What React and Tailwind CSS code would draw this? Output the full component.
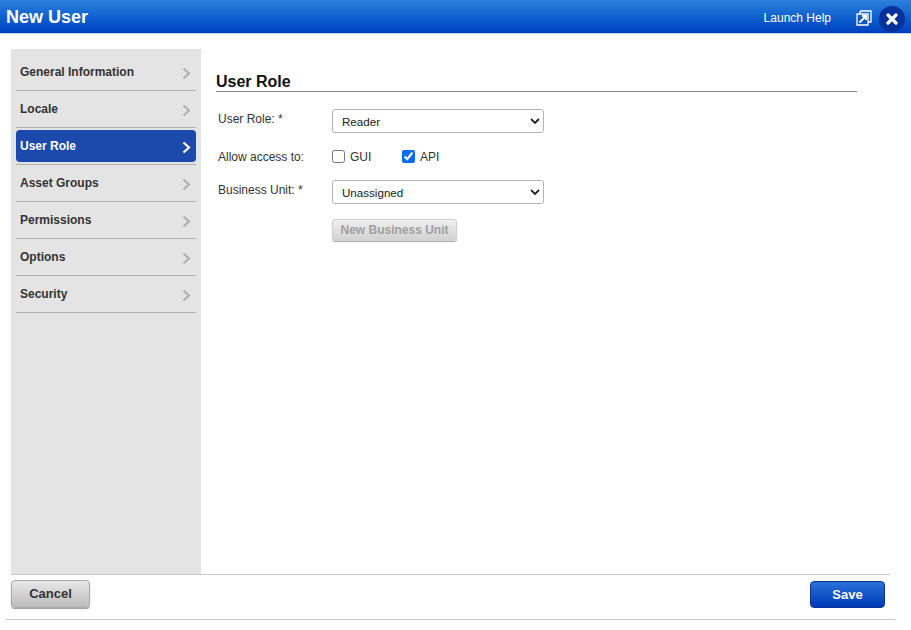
const arial = "font-['Liberation_Sans',Arial,sans-serif]";

const steps = ['General Information', 'Locale', 'User Role', 'Asset Groups', 'Permissions', 'Options', 'Security'];

function Chevron({ active }) {
  return (
    <svg width="9" height="13" viewBox="0 0 9 13" fill="none" className="mt-0.5">
      <path d="M1.5 1.5 L7 6.5 L1.5 11.5" stroke={active ? '#ffffff' : '#b0b0b0'} strokeWidth="2.2" />
    </svg>
  );
}

function SelectBox({ value, options }) {
  return (
    <div className="relative w-[212px] h-6">
      <select
        defaultValue={value}
        className="appearance-none w-full h-full bg-white border border-[#b5b5b5] rounded-[3px] pl-[9px] pt-[2px] text-[11.6px] text-[#222]"
      >
        {options.map(o => <option key={o}>{o}</option>)}
      </select>
      <svg width="10" height="7" viewBox="0 0 10 7" fill="none" className="absolute right-[4px] top-[9px] pointer-events-none">
        <path d="M1 1 L5 5 L9 1" stroke="#222" strokeWidth="1.8" />
      </svg>
    </div>
  );
}

export default function App() {
  return (
    <div className={`${arial} w-[911px] h-[630px] bg-white flex flex-col overflow-hidden`}>
      <header className="h-[34px] shrink-0 bg-gradient-to-b from-[#2a80dc] to-[#0040c0] border-b border-[#c5d3ea] flex items-center justify-between pl-[6px] pr-[6px]">
        <h1 className="text-lg font-bold text-white">New User</h1>
        <div className="flex items-center mt-[5px]">
          <span className="text-xs text-white mr-[25px] -mt-[3px]">Launch Help</span>
          <svg width="16" height="16" viewBox="0 0 16 16" fill="none" className="mr-[7px] -mt-[2px]">
            <path d="M4 1 H15 V12 H12 M4 1 V4 M1 4 H12 V15 H1 Z" stroke="#fff" strokeWidth="1.3" />
            <path d="M3.5 12.5 L9.5 6.5 M6 6 H10 V10" stroke="#fff" strokeWidth="2" />
          </svg>
          <button className="w-[26px] h-[26px] rounded-full bg-[#06309a] flex items-center justify-center">
            <svg width="12" height="12" viewBox="0 0 12 12" fill="none">
              <path d="M2 2 L10 10 M10 2 L2 10" stroke="#fff" strokeWidth="3.2" strokeLinecap="round" />
            </svg>
          </button>
        </div>
      </header>

      <div className="flex h-[526px] shrink-0 mt-[15px] ml-[11px] w-[879px] border-b border-[#c8c8c8]">
        <nav className="w-[190px] bg-[#e4e4e4] pt-[5px] px-[5px]">
          {steps.map(step => {
            const active = step === 'User Role';
            return (
              <div key={step} className={`h-[37px] border-b border-[#b0b0b0] ${active ? 'pt-[2px]' : ''}`}>
                <div className={`flex items-center justify-between pl-1 pr-[5px] text-xs font-bold ${active ? 'h-[32px] bg-[#1b4aac] rounded text-white' : 'h-[36px] text-[#333]'}`}>
                  <span>{step}</span>
                  <Chevron active={active} />
                </div>
              </div>
            );
          })}
        </nav>

        <main className="flex-1 pl-[15px] pt-[23px]">
          <h2 className="w-[641px] h-[20px] text-base leading-[19px] font-bold text-[#111] border-b border-[#8a8a8a]">User Role</h2>
          <div className="mt-[17px] text-xs text-[#333]">
            <div className="flex items-center h-6">
              <label className="w-[116px] pl-[2px] -mt-[4px]">User Role: *</label>
              <SelectBox value="Reader" options={['Reader']} />
            </div>
            <div className="flex items-center h-[14px] mt-[17px]">
              <label className="w-[116px] pl-[2px]">Allow access to:</label>
              <input type="checkbox" className="w-[13px] h-[13px] m-0 -mt-px" />
              <span className="ml-[5px] w-[52px]">GUI</span>
              <input type="checkbox" defaultChecked className="w-[13px] h-[13px] m-0 -mt-px accent-[#0a6cf5]" />
              <span className="ml-[5px]">API</span>
            </div>
            <div className="flex items-center h-6 mt-[16px]">
              <label className="w-[116px] pl-[2px] -mt-[4px]">Business Unit: *</label>
              <SelectBox value="Unassigned" options={['Unassigned']} />
            </div>
            <button disabled className="ml-[116px] mt-[15px] w-[125px] h-[22px] rounded-[3px] border border-[#d0d0d0] bg-gradient-to-b from-[#f0f0f0] to-[#d2d2d2] shadow-[0_1px_1px_#aaa] text-xs font-bold text-[#a0a0a0]">
              New Business Unit
            </button>
          </div>
        </main>
      </div>

      <div className="mx-[6px] w-[889px] h-[45px] shrink-0 border-b border-[#c8c8c8] flex items-start justify-between pl-[5px] pr-[10px] pt-[5px]">
        <button className="w-[79px] h-[28px] rounded-[4px] border border-[#a8a8a8] bg-gradient-to-b from-[#e8e8e8] to-[#bcbcbc] shadow-[0_1px_1px_#999] text-[13px] font-bold text-[#333]">Cancel</button>
        <button className="w-[75px] h-[27px] mt-px rounded-[4px] border border-[#0a3590] bg-gradient-to-b from-[#2a70d8] to-[#0038b8] text-[13px] font-bold text-white">Save</button>
      </div>
    </div>
  );
}
